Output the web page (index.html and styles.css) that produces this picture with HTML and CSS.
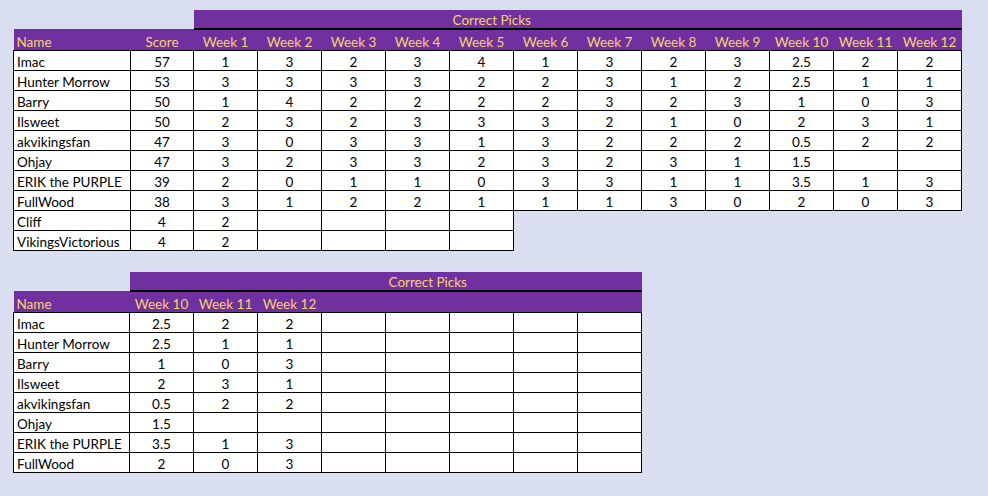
FILE: index.html
```html
<!DOCTYPE html>
<html>
<head>
<meta charset="utf-8">
<link rel="stylesheet" href="styles.css">
</head>
<body>
<div class="page">
<table class="grid grid-main">
  <colgroup>
    <col class="c-name"><col class="c-w"><col class="c-w"><col class="c-w"><col class="c-w"><col class="c-w"><col class="c-w"><col class="c-w"><col class="c-w"><col class="c-w"><col class="c-w"><col class="c-w"><col class="c-w"><col class="c-w">
  </colgroup>
  <tr class="band-row">
    <td class="blank"></td><td class="blank"></td>
    <th class="band" colspan="12">Correct Picks</th>
  </tr>
  <tr class="head-row">
    <th class="left">Name</th><th>Score</th><th>Week 1</th><th>Week 2</th><th>Week 3</th><th>Week 4</th><th>Week 5</th><th>Week 6</th><th>Week 7</th><th>Week 8</th><th>Week 9</th><th>Week 10</th><th>Week 11</th><th>Week 12</th>
  </tr>
  <tr><td class="left">Imac</td><td>57</td><td>1</td><td>3</td><td>2</td><td>3</td><td>4</td><td>1</td><td>3</td><td>2</td><td>3</td><td>2.5</td><td>2</td><td>2</td></tr>
  <tr><td class="left">Hunter Morrow</td><td>53</td><td>3</td><td>3</td><td>3</td><td>3</td><td>2</td><td>2</td><td>3</td><td>1</td><td>2</td><td>2.5</td><td>1</td><td>1</td></tr>
  <tr><td class="left">Barry</td><td>50</td><td>1</td><td>4</td><td>2</td><td>2</td><td>2</td><td>2</td><td>3</td><td>2</td><td>3</td><td>1</td><td>0</td><td>3</td></tr>
  <tr><td class="left">Ilsweet</td><td>50</td><td>2</td><td>3</td><td>2</td><td>3</td><td>3</td><td>3</td><td>2</td><td>1</td><td>0</td><td>2</td><td>3</td><td>1</td></tr>
  <tr><td class="left">akvikingsfan</td><td>47</td><td>3</td><td>0</td><td>3</td><td>3</td><td>1</td><td>3</td><td>2</td><td>2</td><td>2</td><td>0.5</td><td>2</td><td>2</td></tr>
  <tr><td class="left">Ohjay</td><td>47</td><td>3</td><td>2</td><td>3</td><td>3</td><td>2</td><td>3</td><td>2</td><td>3</td><td>1</td><td>1.5</td><td></td><td></td></tr>
  <tr><td class="left">ERIK the PURPLE</td><td>39</td><td>2</td><td>0</td><td>1</td><td>1</td><td>0</td><td>3</td><td>3</td><td>1</td><td>1</td><td>3.5</td><td>1</td><td>3</td></tr>
  <tr><td class="left">FullWood</td><td>38</td><td>3</td><td>1</td><td>2</td><td>2</td><td>1</td><td>1</td><td>1</td><td>3</td><td>0</td><td>2</td><td>0</td><td>3</td></tr>
  <tr><td class="left">Cliff</td><td>4</td><td>2</td><td></td><td></td><td></td><td></td></tr>
  <tr><td class="left">VikingsVictorious</td><td>4</td><td>2</td><td></td><td></td><td></td><td></td></tr>
</table>

<table class="grid grid-second">
  <colgroup>
    <col class="c-name"><col class="c-w"><col class="c-w"><col class="c-w"><col class="c-w"><col class="c-w"><col class="c-w"><col class="c-w"><col class="c-w">
  </colgroup>
  <tr class="band-row">
    <td class="blank"></td>
    <th class="band" colspan="8">Correct Picks</th>
  </tr>
  <tr class="head-row">
    <th class="left">Name</th><th>Week 10</th><th>Week 11</th><th>Week 12</th><th></th><th></th><th></th><th></th><th></th>
  </tr>
  <tr><td class="left">Imac</td><td>2.5</td><td>2</td><td>2</td><td></td><td></td><td></td><td></td><td></td></tr>
  <tr><td class="left">Hunter Morrow</td><td>2.5</td><td>1</td><td>1</td><td></td><td></td><td></td><td></td><td></td></tr>
  <tr><td class="left">Barry</td><td>1</td><td>0</td><td>3</td><td></td><td></td><td></td><td></td><td></td></tr>
  <tr><td class="left">Ilsweet</td><td>2</td><td>3</td><td>1</td><td></td><td></td><td></td><td></td><td></td></tr>
  <tr><td class="left">akvikingsfan</td><td>0.5</td><td>2</td><td>2</td><td></td><td></td><td></td><td></td><td></td></tr>
  <tr><td class="left">Ohjay</td><td>1.5</td><td></td><td></td><td></td><td></td><td></td><td></td><td></td></tr>
  <tr><td class="left">ERIK the PURPLE</td><td>3.5</td><td>1</td><td>3</td><td></td><td></td><td></td><td></td><td></td></tr>
  <tr><td class="left">FullWood</td><td>2</td><td>0</td><td>3</td><td></td><td></td><td></td><td></td><td></td></tr>
</table>
</div>
</body>
</html>
```

FILE: styles.css
```css
html, body {
  margin: 0;
  padding: 0;
  background: #d9dff1;
}
.page {
  padding: 10px 0 0 13px;
  display: flex;
  flex-direction: column;
  align-items: flex-start;
  gap: 21px;
  font-family: Lato, "Liberation Sans", sans-serif;
  font-size: 13.5px;
  color: #000;
}
.grid {
  border-collapse: collapse;
  table-layout: fixed;
}
.grid-main { width: 948px; }
.grid-second { width: 628px; }
.grid-main .c-name { width: 117px; }
.grid-second .c-name { width: 116px; }
.c-w { width: 64px; }
.grid-main col.c-w:nth-child(2) { width: 63px; }

.grid td, .grid th {
  padding: 0 2px;
  height: 20px;
  line-height: 16px;
  vertical-align: bottom;
  text-align: center;
  white-space: nowrap;
  overflow: hidden;
  font-weight: normal;
}
.grid td {
  border: 1px solid #000;
  background: #fff;
  height: 19px;
}
.grid .left { text-align: left; padding-left: 3px; }

.band-row .blank {
  border: none;
  background: transparent;
}
.band {
  background: #7030a0;
  color: #f7d36c;
  text-align: left !important;
  padding-left: 259px !important;
  border-bottom: 2px solid #000;
  height: 18px !important;
}
.head-row th {
  background: #7030a0;
  color: #f7d36c;
  height: 20px;
}
```
